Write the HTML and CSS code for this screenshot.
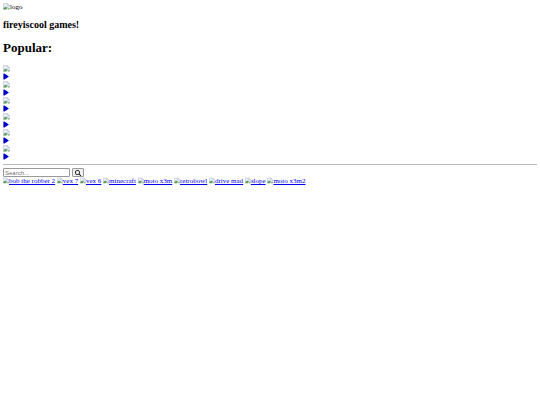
FILE: index.html
```html
<!DOCTYPE html>
<html lang="en">
<head>
    <meta charset="UTF-8">
    <title>fireyiscool games!</title>
    <link rel="stylesheet" href="styles.css">
</head>
<body>
    <svg class="sprite">
        <symbol id="thumb" viewBox="0 0 16 16">
            <path d="M1 1h9l5 5v3l-6 6H1z" fill="#dbe6f2"/>
            <path d="M1 15V1h9l5 5v3" fill="none" stroke="#b0b4b8"/>
            <path d="M10 1v5h5z" fill="#fff" stroke="#b0b4b8"/>
            <circle cx="5" cy="5" r="1.7" fill="#fff"/>
            <path d="M1 15v-3q5-5 8-2l2 1-4 4z" fill="#5f9d58"/>
            <path d="M10 15l5-5v5z" fill="#5f9d58"/>
        </symbol>
        <symbol id="play" viewBox="0 0 384 512">
            <path d="M73 39c-14.8-9.1-33.4-9.4-48.5-.9S0 62.6 0 80v352c0 17.4 9.4 33.4 24.5 41.9s33.7 8.1 48.5-.9l288-176c14.3-8.7 23-24.2 23-41s-8.7-32.2-23-41L73 39z" fill="currentColor"/>
        </symbol>
    </svg>

    <div class="logo"><svg class="thumb"><use href="#thumb"/></svg>logo</div>
    <h2>fireyiscool games!</h2>

    <h1>Popular:</h1>
    <div class="popular">
        <div class="game">
            <svg class="thumb"><use href="#thumb"/></svg>
            <a href="#" aria-label="Play"><svg class="play"><use href="#play"/></svg></a>
        </div>
        <div class="game">
            <svg class="thumb"><use href="#thumb"/></svg>
            <a href="#" aria-label="Play"><svg class="play"><use href="#play"/></svg></a>
        </div>
        <div class="game">
            <svg class="thumb"><use href="#thumb"/></svg>
            <a href="#" aria-label="Play"><svg class="play"><use href="#play"/></svg></a>
        </div>
        <div class="game">
            <svg class="thumb"><use href="#thumb"/></svg>
            <a href="#" aria-label="Play"><svg class="play"><use href="#play"/></svg></a>
        </div>
        <div class="game">
            <svg class="thumb"><use href="#thumb"/></svg>
            <a href="#" aria-label="Play"><svg class="play"><use href="#play"/></svg></a>
        </div>
        <div class="game">
            <svg class="thumb"><use href="#thumb"/></svg>
            <a href="#" aria-label="Play"><svg class="play"><use href="#play"/></svg></a>
        </div>
    </div>

    <hr>

    <form class="search">
        <input type="text" placeholder="Search..." aria-label="Search">
        <button type="submit" aria-label="Search">
            <svg class="glass" viewBox="0 0 512 512"><path d="M416 208c0 45.900-14.900 88.300-40 122.700L502.600 457.400c12.500 12.500 12.500 32.800 0 45.300s-32.800 12.500-45.300 0L330.700 376c-34.400 25.200-76.800 40-122.700 40C93.100 416 0 322.900 0 208S93.100 0 208 0s208 93.100 208 208zM208 352a144 144 0 1 0 0-288 144 144 0 1 0 0 288z"/></svg>
        </button>
    </form>

    <div class="games">
        <a href="#"><svg class="thumb"><use href="#thumb"/></svg>bob the robber 2</a>
        <a href="#"><svg class="thumb"><use href="#thumb"/></svg>vex 7</a>
        <a href="#"><svg class="thumb"><use href="#thumb"/></svg>vex 6</a>
        <a href="#"><svg class="thumb"><use href="#thumb"/></svg>minecraft</a>
        <a href="#"><svg class="thumb"><use href="#thumb"/></svg>moto x3m</a>
        <a href="#"><svg class="thumb"><use href="#thumb"/></svg>retrobowl</a>
        <a href="#"><svg class="thumb"><use href="#thumb"/></svg>drive mad</a>
        <a href="#"><svg class="thumb"><use href="#thumb"/></svg>slope</a>
        <a href="#"><svg class="thumb"><use href="#thumb"/></svg>moto x3m2</a>
    </div>
</body>
</html>
```
FILE: styles.css
```css
* {
    box-sizing: border-box;
}

body {
    margin: 3px;
    font-family: "Liberation Serif", "Times New Roman", serif;
    font-size: 7px;
    line-height: 8px;
    color: #000;
    background: #fff;
}

.sprite {
    display: none;
}

h1,
h2 {
    font-weight: bold;
}

h1 {
    margin: 9px 0 8px;
    font-size: 13px;
    line-height: 16px;
}

h2 {
    margin: 8px 0;
    font-size: 10px;
    line-height: 12px;
}

a {
    color: #0000ee;
}

.thumb {
    width: 7px;
    height: 7px;
}

.logo,
.search {
    display: flex;
}

.game {
    display: grid;
    grid-template-rows: 8px 8px;
    align-items: center;
}

.game a {
    display: flex;
    color: #0000cc;
}

.play {
    width: 6px;
    height: 7px;
}

hr {
    margin: 4px 0 3px;
    border: 0;
    border-top: 1px solid #bbb;
}

.search {
    gap: 2px;
}

.search input {
    width: 67px;
    height: 9px;
    padding: 0 1px;
    border: 1px solid #999;
    border-radius: 1px;
    font-family: "Liberation Sans", Arial, sans-serif;
    font-size: 6px;
    line-height: 7px;
}

.search input::placeholder {
    color: #757575;
}

.search button {
    display: flex;
    align-items: center;
    justify-content: center;
    width: 12px;
    height: 9px;
    padding: 0;
    border: 1px solid #999;
    border-radius: 1px;
    background: #efefef;
}

.glass {
    width: 6px;
    height: 6px;
}

.games .thumb {
    width: 6px;
    vertical-align: top;
}
```
